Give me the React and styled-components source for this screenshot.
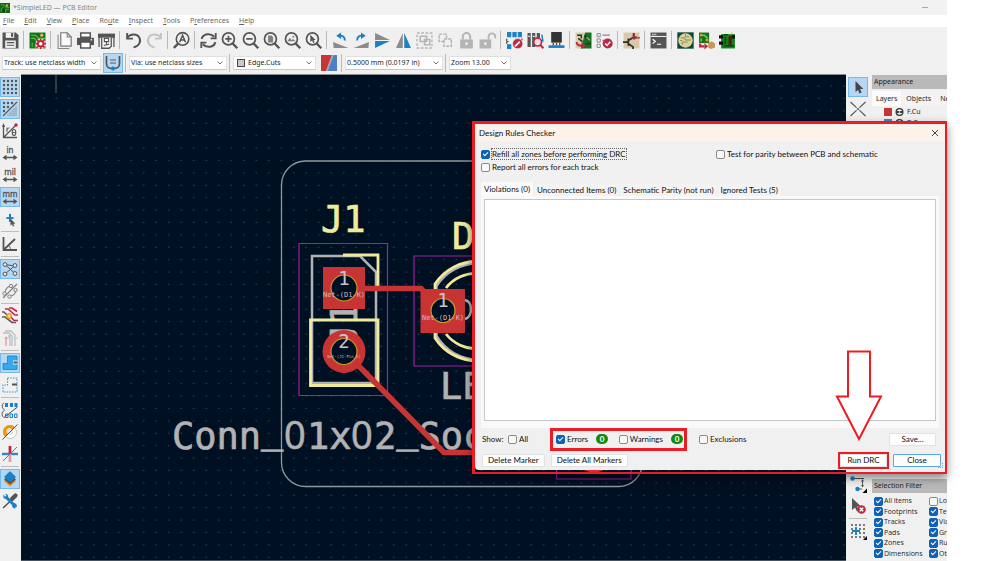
import React from 'react';
import styled, { createGlobalStyle, css } from 'styled-components';

const UI_FONT = '"Noto Sans", "Open Sans", sans-serif';
const COMPACT_FONT = '"Open Sans", "Noto Sans", sans-serif';
const DIALOG_FONT = 'Lato, "Noto Sans", sans-serif';
const RED = '#ed1c24';

const GlobalStyle = createGlobalStyle`
  *, *::before, *::after { box-sizing: border-box; }
  body { margin: 0; background: #fff; font-family: ${UI_FONT}; font-size: 7px; line-height: 10px; color: #1f1f1f; }
  button, select, input { font: inherit; color: inherit; margin: 0; padding: 0; }
`;

/* ---------- window ---------- */

const Page = styled.div`
  display: flex;
  flex-direction: column;
  height: 100vh;
  padding-right: 50px;
  overflow: hidden;
`;

const TitleBar = styled.header`
  display: flex;
  align-items: center;
  height: 15px;
  flex: none;
  gap: 3px;
  padding-right: 19px;
  background: #f2f2f2;
  color: #858585;
`;

const WindowTitle = styled.h1`
  flex: 1;
  margin: 0;
  font-size: 7px;
  font-weight: 400;
`;

const PlainButton = styled.button`
  display: grid;
  place-items: center;
  border: 0;
  background: none;
`;

const MenuBar = styled.nav`
  display: flex;
  align-items: center;
  flex: none;
  gap: 10px;
  height: 12px;
  padding: 0 3px;
  background: #fff;
  color: #666;
`;

const MenuItem = styled.button`
  border: 0;
  background: none;
  white-space: nowrap;
`;

const MainToolbar = styled.div`
  display: flex;
  align-items: center;
  flex: none;
  height: 26px;
  background: #f0f0f0;
`;

const ToolButton = styled.button`
  display: grid;
  place-items: center;
  flex: none;
  width: 21px;
  height: 20px;
  border: 0;
  background: none;
`;

const Divider = styled.span`
  flex: none;
  width: 2px;
  height: 18px;
  margin: 0 ${p => p.$space}px;
  border-left: 1px solid #b9b9b9;
`;

const OptionsToolbar = styled.div`
  display: flex;
  align-items: center;
  flex: none;
  height: 21px;
  padding: 0 2px 1px;
  gap: 2px;
  background: #f0f0f0;
`;

const SelectFrame = styled.label`
  display: flex;
  align-items: center;
  gap: 3px;
  flex: none;
  width: ${p => p.$width}px;
  height: 14px;
  padding: 0 3px 0 1px;
  border: 1px solid #e0e0e0;
  border-bottom-color: #c8c8c8;
  background: #fff;
  select {
    appearance: none;
    flex: 1;
    min-width: 0;
    border: 0;
    background: none;
    outline: none;
  }
`;

const Swatch = styled.span`
  flex: none;
  width: 8px;
  height: 8px;
  margin-left: 2px;
  border: 1px solid #444;
  background: #c9c9c9;
`;

/* ---------- workspace ---------- */

const Workspace = styled.main`
  position: relative;
  display: flex;
  flex: 1;
  min-height: 0;
  background: #f0f0f0;
`;

const SideTools = styled.div`
  display: flex;
  flex-direction: column;
  align-items: center;
  flex: none;
  gap: 2px;
  width: ${p => p.$width}px;
  padding: 3px 1px ${p => p.$bottom || 0}px 0;
`;

const SideButton = styled.button`
  display: grid;
  place-items: center;
  flex: none;
  width: 20px;
  height: 20px;
  border: 1px solid transparent;
  background: none;
  ${p => p.$on && css`
    border-color: #76b9ed;
    background: #b5d7f3;
  `}
`;

const SideDivider = styled.span`
  flex: none;
  width: 18px;
  height: 1px;
  background: #bdbdbd;
`;

const Pusher = styled.span`
  flex: 1;
`;

const Board = styled.svg`
  flex: 1;
  min-width: 0;
  height: 100%;
  background: #001023;
  border-top: 1px solid #8d8d8d;
  border-bottom: 1px solid #46525e;
  font-family: "DejaVu Sans Mono", monospace;
`;

const Panels = styled.aside`
  display: flex;
  flex-direction: column;
  justify-content: space-between;
  flex: none;
  width: 75px;
  margin-left: 2px;
  padding-top: 1px;
  overflow: hidden;
  white-space: nowrap;
`;

const PanelHeader = styled.h2`
  height: 14px;
  margin: 0;
  padding-left: 2px;
  font-size: 7px;
  font-weight: 400;
  line-height: 13px;
  background: #b9b9b9;
  color: #222;
`;

const PanelTabs = styled.div`
  display: flex;
  gap: 1px;
  padding-top: 2px;
`;

const PanelTab = styled.button`
  flex: none;
  height: 15px;
  padding: 0 4px;
  border: 0;
  background: ${p => (p.$active ? '#fbfbfb' : '#f3f3f3')};
`;

const LayerRow = styled.div`
  display: flex;
  align-items: center;
  gap: 3px;
  height: 11px;
  padding-left: 12px;
`;

const LayerColor = styled.span`
  width: 8px;
  height: 8px;
  background: ${p => p.$color};
`;

const FilterPanel = styled.section`
  height: 82px;
  display: flex;
  flex-direction: column;
`;

const FilterGrid = styled.div`
  display: grid;
  flex: 1;
  grid-template-columns: 53px 60px;
  gap: 0 2px;
  padding: 3px 2px 2px;
  font-family: ${COMPACT_FONT};
`;

const Check = styled.label`
  display: flex;
  align-items: center;
  gap: ${p => (p.$tight ? 1 : 2)}px;
  white-space: nowrap;
  input {
    appearance: none;
    flex: none;
    width: 9px;
    height: 9px;
    border: 1px solid #8a8a8a;
    border-radius: 2px;
    background: #f8f8f8;
  }
  input:checked {
    border-color: #0f62b5;
    background: #0f62b5;
  }
  input:checked::after {
    content: "";
    display: block;
    width: 5px;
    height: 3px;
    margin: 1px;
    border: solid #fff;
    border-width: 0 0 1px 1px;
    transform: rotate(-45deg);
  }
`;

/* ---------- dialog ---------- */

const DialogFrame = styled.div`
  position: absolute;
  top: 47px;
  right: 0;
  width: 475px;
  padding-bottom: 2px;
  border: 3px solid ${RED};
  border-bottom-width: 2px;
  border-right-width: 2px;
  box-shadow: 0 4px 9px rgba(0, 0, 0, 0.45);
`;

const Dialog = styled.section`
  background: #f0f0f0;
  border-radius: 0 0 4px 4px;
  font-family: ${DIALOG_FONT};
  font-size: 8px;
  color: #111;
`;

const DialogTitle = styled.div`
  display: flex;
  align-items: center;
  justify-content: space-between;
  height: 17px;
  padding: 0 6px 0 4px;
  background: #faf2eb;
  h2 { margin: 0; font-size: 8px; font-weight: 400; }
`;

const OptionGrid = styled.div`
  display: grid;
  grid-template-columns: 235px 1fr;
  justify-items: start;
  row-gap: 3px;
  padding: 8px 6px 10px;
`;

const FocusText = styled.span`
  outline: 1px dotted #666;
`;

const TabList = styled.div`
  display: flex;
  align-items: flex-end;
  gap: 1px;
  padding: 0 6px;
`;

const Tab = styled.button`
  height: ${p => (p.$active ? 14 : 12)}px;
  padding: 0 3px;
  border: 0;
  white-space: nowrap;
  background: ${p => (p.$active ? '#fafafa' : '#f3f3f3')};
`;

const TabPanel = styled.div`
  margin: 0 6px;
  padding: 3px 3px 7px;
  background: #f9f9f9;
`;

const ViolationList = styled.div`
  height: 222px;
  border: 1px solid #c3c6cc;
  background: #fff;
`;

const ShowRow = styled.div`
  display: flex;
  align-items: center;
  height: 22px;
  padding: 0 9px 0 7px;
`;

const ShowLabel = styled.span`
  width: 26px;
`;

const AllSlot = styled.span`
  width: 42px;
`;

const HighlightGroup = styled.div`
  display: flex;
  align-items: center;
  justify-content: space-between;
  width: 137px;
  height: 23px;
  margin-right: 12px;
  padding: 0 1px 0 3px;
  border: 3px solid ${RED};
`;

const Count = styled.span`
  width: 12px;
  height: 10px;
  border-radius: 5px;
  background: #128a12;
  color: #fff;
  font-weight: 700;
  line-height: 10px;
  text-align: center;
`;

const CountGroup = styled.span`
  display: flex;
  align-items: center;
  gap: 8px;
`;

const ButtonRow = styled.div`
  display: flex;
  align-items: center;
  justify-content: space-between;
  height: 20px;
  padding: 0 4px 0 7px;
`;

const ButtonGroup = styled.div`
  display: flex;
  align-items: center;
  gap: ${p => p.$gap}px;
`;

const PushButton = styled.button`
  height: 13px;
  min-width: ${p => p.$width}px;
  padding: 0 5px;
  border: 1px solid ${p => (p.$primary ? '#5aa5e6' : '#e2e2e2')};
  border-radius: 1px;
  background: #fdfdfd;
  line-height: 10px;
  white-space: nowrap;
`;

const RunHighlight = styled.div`
  display: flex;
  border: 2px solid ${RED};
`;

const Pointer = styled.svg`
  position: absolute;
  right: 62px;
  bottom: 30px;
  fill: #fff;
  stroke: ${RED};
  stroke-width: 2;
`;

const Grip = styled.svg`
  position: absolute;
  right: 1px;
  bottom: 3px;
`;

/* ---------- icons ---------- */

const G = '#545454';
const B = '#1a81c4';
const R = '#bf2641';

const IconSvg = styled.svg`
  overflow: visible;
  fill: none;
`;

const lens = (
  <>
    <circle cx="7" cy="6.5" r="5.6" strokeWidth="1.6" />
    <path d="M11 10.8 15.3 15.300" strokeWidth="2.2" />
  </>
);
const lockBody = <path d="M2 7h12v8.5H2z" fill="#b4b4b4" stroke="none" />;
const gridDots = (r = 1) =>
  [2, 6, 10, 14].flatMap(x => [2, 6, 10, 14].map(y => <circle key={`${x}-${y}`} cx={x} cy={y} r={r} fill={G} stroke="none" />));
const dimArrow = (
  <>
    <path d="M2.5 12.5h11" strokeWidth="1.5" />
    <path d="M0.5 12.5 4.5 9.800v5.400zM15.5 12.5 11.5 9.800v5.400z" fill={G} stroke="none" />
  </>
);
const unit = t => (
  <>
    <text x="8" y="8" textAnchor="middle" fontSize="8" fontFamily={UI_FONT} fill={G} stroke={G} strokeWidth="0.3">{t}</text>
    {dimArrow}
  </>
);

const icons = {
  app: <><path d="M0 0h16v16H0z" fill="#11641a" stroke="none" /><path d="M1 3h5l3 4h6M2 14V9l4-3M9 15v-5h5" stroke="#43c02a" /><circle cx="11" cy="4" r="2" fill="#d8b13a" stroke="none" /><path d="M4 10h4v4H4z" fill="#083b10" stroke="none" /></>,
  save: <><path d="M0.5 0.5h12.5l2.5 2.5v12.5h-15z" fill={G} stroke="none" /><path d="M3.5 0.5h8v5h-8z" fill="#f0f0f0" stroke="none" /><path d="M8.500 1h2v3.500h-2z" fill={G} stroke="none" /><path d="M3 8h10v7H3z" fill="#f0f0f0" stroke="none" /><path d="M4.5 10h7M4.5 12.5h7" strokeWidth="1" /></>,
  setup: <><path d="M0.5 0.5h15v15h-15z" fill="#15701f" stroke="none" /><path d="M2 3h4l3 3h6M2 6h3l2 2M3 14v-4M6 15v-4" stroke="#5cc644" strokeWidth="1" /><circle cx="12" cy="3" r="1.5" fill="#e2c04a" stroke="none" /><circle cx="11" cy="11" r="3.2" stroke="#f6dfe4" strokeWidth="3.500" /><circle cx="11" cy="11" r="2.600" fill="#fff" stroke={R} strokeWidth="1.800" /><path d="M11 6v2M11 14v2M6 11h2M14 11h2M7.5 7.5l1.4 1.4M13.1 13.1l1.4 1.4M14.5 7.5l-1.4 1.4M8.9 13.1l-1.4 1.4" stroke={R} strokeWidth="1.6" /></>,
  page: <><path d="M2 2.5v13M1.5 15.5h11" stroke="#888" strokeWidth="1" /><path d="M4.5 0.7h6l3.8 4v8.6H4.5z" fill="#fafafa" strokeWidth="1.1" stroke="#777" /><path d="M10.5 0.7v4h3.8" strokeWidth="1" stroke="#777" /></>,
  print: <><path d="M3.5 1h9v4h-9z" fill="#fff" strokeWidth="1.4" /><path d="M0 5.5h16v6.8H0z" fill={G} stroke="none" /><path d="M3.5 9.5h9v5.5h-9z" fill="#fff" strokeWidth="1.4" /><circle cx="13.5" cy="7.3" r="0.8" fill="#fff" stroke="none" /></>,
  plot: <><path d="M0 1.5h16v4H0z" fill={G} stroke="none" /><path d="M1 5v9M15 5v9M3.5 5.5v9.8h7l2-2V5.5" fill="#fafafa" strokeWidth="1.2" /><path d="M6 6h4v3H6zM8 9v3M5.5 13c2-2 4 0 5-2" strokeWidth="1.1" /></>,
  undo: <><path d="M2 5.5c3-4 9-4.200 11.300-.5 2.400 4-.3 8.700-5.300 9.500" strokeWidth="1.800" /><path d="M2 1v5.200h5.500" strokeWidth="1.800" /></>,
  redo: <g stroke="#c2c2c2"><path d="M14 5.500c-3-4-9-4.200-11.300-.5C.300 9 3 13.700 8 14.500" strokeWidth="1.800" /><path d="M14 1v5.200H8.500" strokeWidth="1.800" /></g>,
  find: <><circle cx="9" cy="6.500" r="5.900" strokeWidth="1.500" /><path d="M5 10.700.800 15" strokeWidth="2.200" /><path d="M6.300 9.500 9 3l2.700 6.500M7.300 7.500h3.400" strokeWidth="1.400" /></>,
  refresh: <><path d="M1.500 6.500C3 1.500 9.500.500 13.500 4.500M14.500 9.500C13 14.500 6.500 15.500 2.500 11.500" strokeWidth="1.900" /><path d="M14.800 1v5H10M1.200 15v-5H6" strokeWidth="1.700" /></>,
  zoomIn: <>{lens}<path d="M4 6.500h6M7 3.500v6" strokeWidth="1.600" /></>,
  zoomOut: <>{lens}<path d="M4 6.500h6" strokeWidth="1.600" /></>,
  zoomFit: <>{lens}<path d="M4.800 3.200h3.200l1.500 1.500v5.100H4.800z" fill="#808080" stroke="none" /></>,
  zoomObj: <>{lens}<path d="M3 8.800 5.500 5.500l1.600 2 1.400-1L11 8.800z" fill="#808080" stroke="none" /><circle cx="8.800" cy="4.500" r="1" fill="#808080" stroke="none" /></>,
  zoomSel: <>{lens}<path d="M5 2.500v7l1.700-1.400 1 2.200 1.300-.6-1-2.200h2z" fill={G} stroke="none" /></>,
  ccw: <><path d="M15.500 15H1.500L1 9.500z" fill="#8b8b8b" stroke="none" /><path d="M12 8c.5-3-2-5-5-4.500" stroke={B} strokeWidth="1.800" /><path d="M8.500.500v6L4 3.600z" fill={B} stroke="none" /></>,
  cw: <><path d="M.500 15h14l.500-5.500z" fill="#8b8b8b" stroke="none" /><path d="M4 8c-.5-3 2-5 5-4.500" stroke={B} strokeWidth="1.800" /><path d="M7.500.500v6L12 3.600z" fill={B} stroke="none" /></>,
  mirrorV: <><path d="M1 1v6.500h14z" fill="#8b8b8b" stroke="none" /><path d="M1 15V8.500h14z" fill={B} stroke="none" /></>,
  mirrorH: <><path d="M7.300 1v14H1z" fill="#8b8b8b" stroke="none" /><path d="M8.700 1v14H15z" fill={B} stroke="none" /></>,
  group: <g stroke="#b4b4b4"><path d="M1 1h14v14H1z" strokeDasharray="2.500 1.500" strokeWidth="1.300" /><path d="M4 4h6v5H4zM8 7h5v5H8z" fill="#f0f0f0" /></g>,
  ungroup: <g stroke="#b4b4b4"><path d="M2 2h7v7H2z" strokeDasharray="3 1" /><path d="M6.500 6.500h7v7h-7z" fill="#f0f0f0" strokeDasharray="3 1" /></g>,
  lock: <>{lockBody}<path d="M4.500 7V4.500a3.500 3.500 0 0 1 7 0V7" stroke="#b4b4b4" strokeWidth="1.800" /><circle cx="8" cy="11" r="1.300" fill="#f0f0f0" stroke="none" /></>,
  unlock: <><path d="M.500 7h11v8.500H.500z" fill="#b4b4b4" stroke="none" /><path d="M9 7V4a3.200 3.200 0 0 1 6.300 0v2" stroke="#b4b4b4" strokeWidth="1.700" /><circle cx="6" cy="11" r="1.300" fill="#f0f0f0" stroke="none" /></>,
  fpEdit: <><path d="M1.500.500h3v4h-3zM6.500.500h3v4h-3zM11.500.500h3v4h-3zM1.500 12h3v3.500h-3z" fill={B} stroke={B} strokeWidth="1" /><path d="M1 6.500c-1 1-.5 2 .5 2.500-1.300.5-1 1.500-.5 2M15 6v2" strokeWidth="1.200" /><circle cx="11" cy="11" r="4.800" fill={R} stroke="#f0f0f0" strokeWidth="0.600" /><path d="M8.500 13.500 13 9" stroke="#fff" strokeWidth="1.700" /></>,
  library: <><path d="M.500 1h3v13h-3zM4.800 1h3v13h-3zM9.200 1h3v5h-3z" fill={G} stroke="none" /><path d="M1 4h2M5.300 4h2" stroke="#fff" strokeWidth="1" /><circle cx="10" cy="9.500" r="3.700" fill="#f3dfe3" stroke={R} strokeWidth="1.500" /><path d="m12.500 12.300 3 3" stroke={R} strokeWidth="1.900" /><path d="M14 2.500 15 9" stroke={B} /></>,
  viewer3d: <><path d="M3 0h10v10H3z" fill="#333" stroke="none" /><path d="M5 10v3M8 10v3M11 10v3" strokeWidth="1.300" /><path d="M.500 12.500h15v2.500H.500z" fill={B} stroke="none" /></>,
  update: <><path d="M.500.500h9l-4 15h-5z" fill="#d9cfae" stroke="none" /><path d="M9.500.500h6v15h-10z" fill="#15701f" stroke="none" /><path d="M2 3h4v3M3 6l4 3M9 3l5 6M10 11h5" stroke="#302c28" strokeWidth="1.400" /><path d="M11 5l3 3" stroke="#6fd04f" /><path d="M1.500 9.500c0 3 2 3.500 5 3.500" stroke={R} strokeWidth="1.800" /><path d="M6 9.700v6.300l4-3z" fill={R} stroke="none" /></>,
  drc: <><path d="M1 1.500h3v3H1zM1 6.500h3v3H1zM1 11.500h3v3H1z" strokeWidth="0.900" stroke="#888" /><path d="M6 3h7M6 8h3" stroke="#888" strokeWidth="1.200" /><circle cx="11" cy="10.800" r="4.700" fill={R} stroke="none" /><path d="m8.600 10.800 1.800 1.900 3-3.500" stroke="#fff" strokeWidth="1.400" /></>,
  schematic: <><path d="M.500.500h15v15H.500z" fill="#d8c9ad" stroke="none" /><path d="M0 9.500h4.500M5 6v7M5 8l5-3V1M5 11l4.500 3v2M10 5h3" stroke="#302c28" strokeWidth="1.600" /><circle cx="10.500" cy="5.500" r="1.700" fill={R} stroke="none" /><path d="M10.500 5.500H16M10.500 1v4.500" stroke={R} strokeWidth="1.300" /></>,
  console: <><path d="M.500.500h15v15H.500z" fill={G} stroke="none" /><path d="M.500 4.200h15" stroke="#f0f0f0" strokeWidth="1" /><path d="M2 2.300h4" stroke="#ddd" strokeDasharray="1 .500" /><path d="m2.500 6.800 2.500 2-2.500 2M6.500 11.500h4" stroke="#fff" strokeWidth="1.100" /></>,
  plugin1: <><path d="M.300.300h15.400v15.400H.300z" fill="#0b4a38" stroke="none" /><circle cx="8" cy="8" r="6.800" fill="#ddd29a" stroke="none" /><path d="M3.500 5.500h4v2h5.500M5 12V9.500h5M8 2v2.500h3.500M3 8h2" stroke="#7c8459" strokeWidth="0.800" /></>,
  plugin2: <><path d="M1 .500h9.500v10H1z" fill="#15701f" stroke="none" /><path d="M3 3h3l3 3M3 6v3" stroke="#6fd04f" /><circle cx="3" cy="3" r="1.300" fill="#e59a28" stroke="none" /><circle cx="8.500" cy="7.500" r="1.500" fill="#e59a28" stroke="none" /><path d="M2 11v2.500h4" stroke={R} strokeWidth="2.200" /><path d="M6 10.500v6l3.500-3z" fill={R} stroke="none" /><path d="M9.500 10 13 9l3 1.500v4L12.500 16l-3-1.500z" fill="#c8965c" stroke="none" /></>,
  plugin3: <><path d="M2 2h13v13.500H2z" fill="#16801c" stroke="none" /><path d="M9 4h3v8H9z" fill="#4d1d12" stroke="none" /><path d="M0 3h4v3H0zM0 9h4v3H0zM12 3h3v3h-3z" fill="#111" stroke="none" /><path d="M5 2.500h3M5 13h9M6 5v6" stroke="#0b3d10" /><path d="M11 0h2v2h-2z" fill="#e9dca0" stroke="none" /></>,
  netclass: <><path d="M1.500 1v7.500c0 4 2 5 6.500 5s6.500-1 6.500-5V1" strokeWidth="1.700" /><path d="M5 5h6M5 8h6" strokeWidth="1.200" /><circle cx="8" cy="13.500" r="2" fill={B} stroke="none" /></>,
  layers: <><path d="M0 0h11L5 16H0z" fill="#c83434" stroke="none" /><path d="M12.500 0H16v16H6.500z" fill="#4d7fc4" stroke="none" /><path d="M11.500 0 5.700 16" stroke="#9b9b9b" strokeWidth="1.400" /></>,
  grid: gridDots(1.2),
  gridOver: <><path d="M1 15 15 1" strokeWidth="1.100" />{[[2, 2], [6, 2], [10, 2], [2, 6], [6, 6], [2, 10]].map(([x, y]) => <circle key={`${x}-${y}`} cx={x} cy={y} r="1.200" fill={G} stroke="none" />)}{[[14, 6], [12, 8], [14, 8], [10, 10], [12, 10], [14, 10], [8, 12], [10, 12], [12, 12], [14, 12], [6, 14], [8, 14], [10, 14], [12, 14], [14, 14]].map(([x, y]) => <circle key={`s${x}-${y}`} cx={x} cy={y} r="0.600" fill={G} stroke="none" />)}</>,
  polar: <><path d="M1.500 2v12.500H15M1.500 14.500 14 2" strokeWidth="1.300" /><path d="M0 4 1.500 0 3 4z" fill={G} stroke="none" /><circle cx="14" cy="2" r="1.700" fill={R} stroke="none" /><path d="M5 9V4.500M5 6.500C5.500 5 7 5 7.500 5" strokeWidth="1" /><ellipse cx="12" cy="9.500" rx="1.800" ry="3" strokeWidth="1.100" /><path d="M10.200 9.500h3.600" strokeWidth="0.900" /></>,
  inch: unit('in'),
  mil: unit('mil'),
  mm: unit('mm'),
  cursor: <><path d="M0 7h16M8 0v15" stroke="#ddd" strokeWidth="0.800" /><path d="M8 3v8M4.500 7h7" stroke={B} strokeWidth="2" /><path d="M8.500 7.500v7l1.500-1.300 1 2.300 1.300-.5-1-2.300h2z" fill={G} stroke="none" /></>,
  angle: <><path d="M1.500 1v13H15M1.500 14 13 3" strokeWidth="1.800" /><path d="M6.500 9.500c1.500 1 2 2.500 2 4.500" strokeWidth="1" /></>,
  ratsnest: <><path d="M3 3.500 13 12.500M3 13 13 4.500M3 3.500 13 5" strokeWidth="1" />{[[3, 3.5], [13, 4.5], [3, 13], [13, 12.5]].map(([x, y]) => <circle key={`${x}-${y}`} cx={x} cy={y} r="1.900" fill="#e8e8e8" strokeWidth="1" />)}</>,
  ratsCurve: <g stroke="#808080"><path d="M1 15 15 1M3 10c0-4 3-7 6-6.500M8 13c4 0 6-3 5.500-7" strokeWidth="1.200" /><circle cx="2.500" cy="10.500" r="1.700" fill="#eee" strokeWidth="1" /><circle cx="9" cy="3" r="1.700" fill="#eee" strokeWidth="1" /><circle cx="7.500" cy="13.500" r="1.700" fill="#eee" strokeWidth="1" /><circle cx="13.500" cy="7" r="1.700" fill="#eee" strokeWidth="1" /></g>,
  highlight: <><path d="M3 1h3l7 6h3M7 0h3l5 3.500M8 8l4 4.500h4" stroke={R} strokeWidth="1.600" /><path d="M0 4h2l4 4M0 9h3l7 5.500h4" stroke="#5d5d5d" strokeWidth="1.600" /><circle cx="7" cy="8" r="2.300" fill="#f7d58b" stroke="#f2930c" strokeWidth="1.300" /></>,
  netnames: <g stroke="#bdbdbd"><path d="M1 3h6l3 3v10M3 1h6l4 4v11M6 6h2v10" strokeWidth="1.300" /><path d="M4 8v8" stroke="#e8b4bd" strokeWidth="2" /><path d="M3 8h13" stroke="#bcd8ea" strokeWidth="1.500" /><circle cx="4" cy="8" r="1.500" fill="#e8a3ae" stroke="none" /></g>,
  zoneFill: <><path d="M5.500 1H15v13.500H1V8.500h4.500z" fill="#35a9ea" stroke={B} strokeWidth="0.800" /><path d="M15.500 7.500H11" stroke="#f0f0f0" strokeWidth="4" /><path d="M15.500 7.500h-4" strokeWidth="2" /></>,
  zoneOutline: <><path d="M5.500 1H15v14H1V8h4.500z" stroke="#3b97cf" strokeDasharray="1.500 1.200" strokeWidth="1.100" /><path d="M15 7.500h-5" strokeWidth="2" /></>,
  fpOutline: <><path d="M3 1h3v4H3zM8 1h3v4H8zM12.500 1h3v4h-3z" fill={B} stroke="none" /><path d="M3.500 12h2.500v3.500H3.500zM8 12h2.500v3.500H8zM12.500 12H15v3.500h-2.500z" stroke={B} strokeWidth="1" /><path d="M2 1C-.500 2 0 6 1.500 7c1 .8 1 2-1 3-.8 1.500-.500 4 1 5.500M15.500 5 2 15.500" strokeWidth="1" /></>,
  via: <><circle cx="8" cy="8" r="6.500" fill="#fff" stroke="#c4c4c4" strokeWidth="1" /><path d="M12.800 3.200A6.800 6.800 0 1 0 3.200 12.800L6 10a3 3 0 1 1 4-4z" fill="#f2930c" stroke="none" /><circle cx="8" cy="8" r="2.500" fill="#eee" stroke="#c4c4c4" strokeWidth=".600" /><path d="M.500 15.500l15-15" strokeWidth="1" /></>,
  trackMode: <><path d="M0 8h16" stroke="#2e86c2" strokeWidth="2.400" /><path d="M8 0v8" stroke={R} strokeWidth="2.800" /><path d="M8 8v8" stroke="#dba0ab" strokeWidth="2.800" /><path d="M1 15 15 1" strokeWidth="1" stroke="#777" /></>,
  layerMgr: <><path d="M8 5 14 10 8 15.500 2 10z" fill="#f2930c" stroke="none" /><path d="M8 3.500 14 8.500 8 13.500 2 8.500z" fill={G} stroke="none" /><path d="M8 0 14 6 8 11.500 2 6z" fill={B} stroke="none" /></>,
  tools: <><path d="M1 15 9 7.500" stroke={G} strokeWidth="1.500" /><path d="m10 6 3.500-3.500" stroke={G} strokeWidth="4.200" strokeLinecap="round" /><path d="M4.500 4.500l8.500 8.500" stroke={B} strokeWidth="3" strokeLinecap="round" /><path d="M1.500 1.500C.500 4 2 6.500 5 6l1.300-2.200C6 1.500 4.500.500 3 .800l1.500 2L3 4zM14.500 14.500c1-2.500-.5-4.500-3-4.200L10 12.500c.2 2.300 2 3.200 3.500 2.800l-1.500-2 1.500-1z" fill={B} stroke="none" /></>,
  arrow: <path d="M5.500 2v11l2.500-2.100 1.600 3.500 2-.9-1.600-3.500h3.300z" fill="#454545" stroke="none" />,
  cross: <><path d="M.500 1 6.500 6.700M15.500 1 9.500 6.700M.500 15l6-5.700M15.500 15l-6-5.700" strokeWidth="1.100" /><path d="m6.500 6.700 3 2.600M9.500 6.700l-3 2.600" strokeWidth="0.800" /></>,
  dimension: <><path d="M2 2.500h12M8 13h4M12.500 4v6" strokeWidth="1" /><circle cx="2.500" cy="2.500" r="2.200" fill={B} stroke="none" /><circle cx="7.500" cy="13" r="2.200" fill={B} stroke="none" /><path d="m11 5.500 1.500-2.500L14 5.500zM11 9l1.500 2.500L14 9z" fill={G} stroke="none" /><path d="M17 12.500V17h-4.500z" fill="#000" stroke="none" /></>,
  remove: <><path d="M2 0v12l3-2.500L7 13.500l2-1L7 8.500h4z" fill={G} stroke="none" /><circle cx="11.500" cy="11.500" r="4.300" fill={R} stroke="none" /><path d="m9.800 9.800 3.400 3.400M13.200 9.800l-3.400 3.400" stroke="#fff" strokeWidth="1.500" /></>,
  origin: <>{gridDots(1)}<path d="M6 4v8M2 8h8" stroke={B} strokeWidth="1.800" /><path d="M17 13v4h-4z" fill="#000" stroke="none" /></>,
};

const Icon = ({ name, size = 17 }) => (
  <IconSvg width={size} height={size} viewBox="0 0 16 16" stroke={G} strokeWidth="1.4" aria-hidden="true">
    {icons[name]}
  </IconSvg>
);

const Chevron = () => (
  <svg width="6" height="4" viewBox="0 0 6 4" fill="none" stroke="#777" aria-hidden="true">
    <path d="M0.500 0.500 3 3l2.500-2.500" />
  </svg>
);

const Eye = () => (
  <svg width="9" height="8" viewBox="0 0 9 8" fill="none" stroke="#333" aria-hidden="true">
    <circle cx="4.500" cy="4" r="3.400" strokeWidth="1.200" />
    <path d="M1.500 4h6" strokeWidth="2" />
    <circle cx="4.500" cy="4" r="0.800" fill="#fff" stroke="none" />
  </svg>
);

/* ---------- data ---------- */

const menus = [['', 'F', 'ile'], ['', 'E', 'dit'], ['', 'V', 'iew'], ['', 'P', 'lace'], ['Ro', 'u', 'te'], ['', 'I', 'nspect'], ['', 'T', 'ools'], ['P', 'r', 'eferences'], ['', 'H', 'elp']];

const mainTools = [
  'save', '|', 'setup', '|', 'page', 'print', 'plot', '|', 'undo', 'redo', '|', 'find', '|',
  'refresh', 'zoomIn', 'zoomOut', 'zoomFit', 'zoomObj', 'zoomSel', '|',
  'ccw', 'cw', 'mirrorV', 'mirrorH', 'group', 'ungroup', 'lock', 'unlock', '|',
  'fpEdit', 'library', 'viewer3d', '|', 'update', 'drc', '|', 'schematic', '|', 'console', '|',
  'plugin1', 'plugin2', 'plugin3',
];

const leftTools = [
  'grid', 'gridOver', 'polar', 'inch', 'mil', 'mm', 'cursor', '|', 'angle', '|', 'ratsnest', 'ratsCurve', '|',
  'highlight', 'netnames', '|', 'zoneFill', 'zoneOutline', '|', 'fpOutline', 'via', 'trackMode', '|', 'layerMgr', 'tools',
];
const activeLeft = new Set(['grid', 'gridOver', 'mm', 'ratsnest', 'zoneFill', 'layerMgr']);

const filters = [
  ['All items', true], ['Locked items', false], ['Footprints', true], ['Text', true], ['Tracks', true], ['Vias', true],
  ['Pads', true], ['Graphics', true], ['Zones', true], ['Rule areas', true], ['Dimensions', true], ['Other items', true],
];

/* ---------- parts ---------- */

const Select = ({ label, value, width, swatch }) => (
  <SelectFrame $width={width}>
    {swatch && <Swatch />}
    <select aria-label={label} defaultValue={value}>
      <option>{value}</option>
    </select>
    <Chevron />
  </SelectFrame>
);

const CheckBox = ({ label, checked, tight, focused }) => (
  <Check $tight={tight}>
    <input type="checkbox" defaultChecked={checked} />
    {focused ? <FocusText>{label}</FocusText> : label}
  </Check>
);

const BoardView = () => (
  <Board role="img" aria-label="Board layout">
    <defs>
      <pattern id="dots" x="25" y="79" width="12.5" height="12.4" patternUnits="userSpaceOnUse">
        <rect x="5.500" y="6.500" width="1.500" height="1" fill="#3b4954" />
      </pattern>
    </defs>
    <g transform="translate(-21 -75)" fill="none">
      <rect x="24" y="79" width="900" height="600" fill="url(#dots)" />
      <path d="M56 75v18" stroke="#59636e" />
      <rect x="281.500" y="161" width="361" height="325.500" rx="24" stroke="#8f979e" strokeWidth="1.300" />
      <g fill="#b2b2b2" stroke="#b2b2b2" strokeWidth="0.700" fontSize="37">
        <text x="172" y="449">Conn<tspan dy="-7">_</tspan></text>
        <text x="284" y="449" fontFamily="Open Sans" fontSize="38">0</text>
        <text x="307" y="449">1x</text>
        <text x="351" y="449" fontFamily="Open Sans" fontSize="38">0</text>
        <text x="374" y="449">2<tspan dy="-7">_</tspan><tspan dy="7">Soc</tspan></text>
        <text x="440" y="399">LED</text>
        <text transform="translate(357 347) rotate(-90)">J1</text>
      </g>
      <path d="M312 256h48l16 16v111h-64z" stroke="#b2b2b2" strokeWidth="2.500" />
      <path d="M436.500 285v53M436.500 286A48 48 0 0 1 478 263.500M436.500 336A48 48 0 0 0 478 359.500" stroke="#b2b2b2" strokeWidth="2.500" />
      <path d="M465 300c8 2 8 16 0 19" stroke="#b2b2b2" strokeWidth="2.500" />
      <g stroke="#f0eb9b" strokeWidth="2.800">
        <path d="M343 255h35v35M310.500 320h67.500v65.500h-67.500z" />
        <path d="M435 289v-5A50 50 0 0 1 478 261.500M446 288A38 38 0 0 1 478 273.500M435 333v5A50 50 0 0 0 478 361M446 334A38 38 0 0 0 478 348.500" />
      </g>
      <g fill="#f0eb9b" stroke="#f0eb9b" strokeWidth="0.700" fontSize="37">
        <text x="321" y="232">J1</text>
        <text x="452" y="249">D1</text>
      </g>
      <path d="M299 243.500h88.500v152H299zM414 256h120v110H414zM556.500 400h74.500v79h-74.500z" stroke="#a01fa0" strokeWidth="1.200" />
      <g stroke="#c83434" strokeWidth="5.500">
        <path d="M344 288.500h77l22 22M344 351l100 101.500h150" />
      </g>
      <path d="M323 267h42v42h-42zM420.500 289h44.500v44h-44.500z" fill="#c83434" />
      <circle cx="344" cy="351.500" r="21.500" fill="#c83434" />
      <circle cx="594" cy="451" r="21.500" fill="#c83434" />
      <g fill="#001023" stroke="#c99a2b" strokeWidth="1.200">
        <circle cx="344" cy="288" r="13" />
        <circle cx="344" cy="351.500" r="13" />
        <circle cx="443" cy="310.500" r="12" />
      </g>
      <g fill="#c9c3d0" textAnchor="middle">
        <g fontSize="19">
          <text x="344" y="285">1</text>
          <text x="344" y="348">2</text>
          <text x="443" y="307">1</text>
        </g>
        <g fontSize="7" fill="#d7b7bd">
          <text x="344" y="297">Net-(D1-K)</text>
          <text x="443" y="320">Net-(D1-K)</text>
        </g>
        <text x="344" y="358" fontSize="4" fill="#d7b7bd">Net-(J1-Pin_2)</text>
      </g>
    </g>
  </Board>
);

const DrcDialog = () => (
  <DialogFrame>
    <Dialog role="dialog" aria-label="Design Rules Checker">
      <DialogTitle>
        <h2>Design Rules Checker</h2>
        <PlainButton aria-label="Close dialog">
          <svg width="8" height="8" viewBox="0 0 8 8" stroke="#444" aria-hidden="true"><path d="m1 1 6 6M7 1 1 7" /></svg>
        </PlainButton>
      </DialogTitle>
      <OptionGrid>
        <CheckBox label="Refill all zones before performing DRC" checked focused />
        <CheckBox label="Test for parity between PCB and schematic" />
        <CheckBox label="Report all errors for each track" />
      </OptionGrid>
      <TabList role="tablist">
        <Tab role="tab" aria-selected="true" $active>Violations (0)</Tab>
        <Tab role="tab">Unconnected Items (0)</Tab>
        <Tab role="tab">Schematic Parity (not run)</Tab>
        <Tab role="tab">Ignored Tests (5)</Tab>
      </TabList>
      <TabPanel role="tabpanel">
        <ViolationList />
      </TabPanel>
      <ShowRow>
        <ShowLabel>Show:</ShowLabel>
        <AllSlot><CheckBox label="All" /></AllSlot>
        <HighlightGroup>
          <CountGroup><CheckBox label="Errors" checked /><Count>0</Count></CountGroup>
          <CountGroup><CheckBox label="Warnings" /><Count>0</Count></CountGroup>
        </HighlightGroup>
        <CheckBox label="Exclusions" />
        <Pusher />
        <PushButton $width={47}>Save...</PushButton>
      </ShowRow>
      <ButtonRow>
        <ButtonGroup $gap={6}>
          <PushButton $width={62}>Delete Marker</PushButton>
          <PushButton $width={76}>Delete All Markers</PushButton>
        </ButtonGroup>
        <ButtonGroup $gap={4}>
          <RunHighlight><PushButton $width={47}>Run DRC</PushButton></RunHighlight>
          <PushButton $width={48} $primary>Close</PushButton>
        </ButtonGroup>
      </ButtonRow>
    </Dialog>
    <Pointer width="48" height="92" viewBox="0 0 48 92" aria-hidden="true">
      <path d="M13 1.500h22v45h11L24 89 2 46.500h11z" />
    </Pointer>
    <Grip width="7" height="7" viewBox="0 0 7 7" fill="#9a9a9a" aria-hidden="true">
      <path d="M5 1h1v1H5zM3 3h1v1H3zM5 3h1v1H5zM1 5h1v1H1zM3 5h1v1H3zM5 5h1v1H5z" />
    </Grip>
  </DialogFrame>
);

export default function App() {
  return (
    <Page>
      <GlobalStyle />
      <TitleBar>
        <Icon name="app" size={10} />
        <WindowTitle>*SimpleLED — PCB Editor</WindowTitle>
        <PlainButton aria-label="Minimize">
          <svg width="6" height="2" aria-hidden="true"><path d="M0 0.500h6" stroke="#aaa" /></svg>
        </PlainButton>
      </TitleBar>
      <MenuBar>
        {menus.map(([a, u, b]) => <MenuItem key={a + u + b}>{a}<u>{u}</u>{b}</MenuItem>)}
      </MenuBar>
      <MainToolbar role="toolbar">
        {mainTools.map((t, i) => (t === '|' ? <Divider key={i} $space={2} /> : <ToolButton key={t} aria-label={t}><Icon name={t} /></ToolButton>))}
      </MainToolbar>
      <OptionsToolbar role="toolbar">
        <Select label="Track width" value="Track: use netclass width" width={99} />
        <SideButton $on aria-label="Use netclass width"><Icon name="netclass" size={16} /></SideButton>
        <Divider $space={0} />
        <Select label="Via size" value="Via: use netclass sizes" width={98} />
        <Divider $space={0} />
        <Select label="Active layer" value="Edge.Cuts" width={83} swatch />
        <ToolButton aria-label="Layer pair"><Icon name="layers" size={16} /></ToolButton>
        <Divider $space={0} />
        <Select label="Grid" value="0.5000 mm (0.0197 in)" width={98} />
        <Divider $space={0} />
        <Select label="Zoom" value="Zoom 13.00" width={62} />
      </OptionsToolbar>
      <Workspace>
        <SideTools $width={21} role="toolbar">
          {leftTools.map((t, i) => (t === '|' ? <SideDivider key={i} /> : (
            <SideButton key={t} $on={activeLeft.has(t)} aria-label={t}><Icon name={t} size={16} /></SideButton>
          )))}
        </SideTools>
        <BoardView />
        <SideTools $width={24} $bottom={20} role="toolbar">
          <SideButton $on aria-label="Select"><Icon name="arrow" size={16} /></SideButton>
          <SideButton aria-label="Local ratsnest"><Icon name="cross" size={16} /></SideButton>
          <Pusher />
          <SideButton aria-label="Dimension"><Icon name="dimension" size={16} /></SideButton>
          <SideButton aria-label="Delete"><Icon name="remove" size={16} /></SideButton>
          <SideDivider />
          <SideButton aria-label="Grid origin"><Icon name="origin" size={16} /></SideButton>
        </SideTools>
        <Panels>
          <section>
            <PanelHeader>Appearance</PanelHeader>
            <PanelTabs role="tablist">
              <PanelTab role="tab" $active>Layers</PanelTab>
              <PanelTab role="tab">Objects</PanelTab>
              <PanelTab role="tab">Nets</PanelTab>
            </PanelTabs>
            <LayerRow><LayerColor $color="#c83434" /><Eye />F.Cu</LayerRow>
            <LayerRow><LayerColor $color="#4d7fc4" /><Eye />B.Cu</LayerRow>
          </section>
          <FilterPanel>
            <PanelHeader>Selection Filter</PanelHeader>
            <FilterGrid>
              {filters.map(([label, on]) => <CheckBox key={label} label={label} checked={on} tight />)}
            </FilterGrid>
          </FilterPanel>
        </Panels>
        <DrcDialog />
      </Workspace>
    </Page>
  );
}
